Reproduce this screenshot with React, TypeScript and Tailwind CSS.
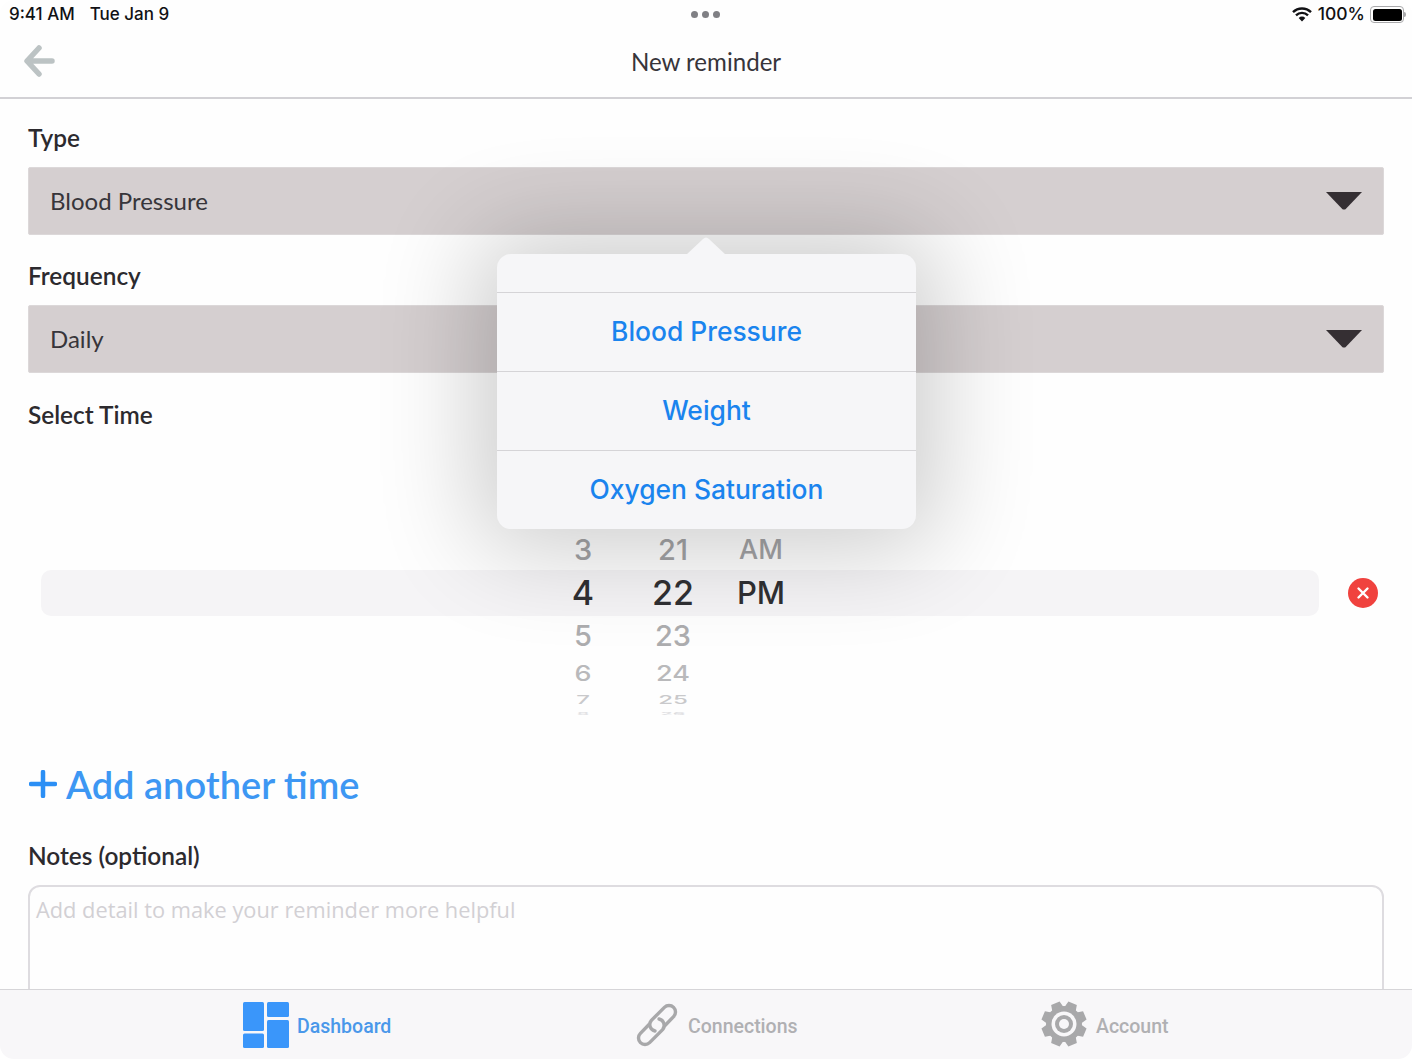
const HOURS = [
  { label: '3', h: 'h-[44px]', cls: 'text-[29px] font-medium text-[#a3a3a5]' },
  { label: '4', h: 'h-[43px]', cls: 'text-[34px] font-medium text-[#303033]' },
  { label: '5', h: 'h-[43px]', cls: 'text-[29px] font-medium text-[#adadaf]' },
  { label: '6', h: 'h-[32px]', cls: 'text-[27px] font-medium text-[#b9b9bb] scale-y-[0.8]' },
  { label: '7', h: 'h-[22px]', cls: 'text-[24px] font-medium text-[#c9c9cb] scale-y-[0.5]' },
  { label: '8', h: 'h-[5px]', cls: 'text-[20px] font-medium text-[#dcdcde] scale-y-[0.2]' },
];

const MINUTES = [
  { label: '21', h: 'h-[44px]', cls: 'text-[29px] font-medium text-[#a3a3a5]' },
  { label: '22', h: 'h-[43px]', cls: 'text-[34px] font-medium text-[#303033]' },
  { label: '23', h: 'h-[43px]', cls: 'text-[29px] font-medium text-[#adadaf]' },
  { label: '24', h: 'h-[32px]', cls: 'text-[27px] font-medium text-[#b9b9bb] scale-y-[0.8]' },
  { label: '25', h: 'h-[22px]', cls: 'text-[24px] font-medium text-[#c9c9cb] scale-y-[0.5]' },
  { label: '26', h: 'h-[5px]', cls: 'text-[20px] font-medium text-[#dcdcde] scale-y-[0.2]' },
];

const OPTIONS = ['Blood Pressure', 'Weight', 'Oxygen Saturation'];

// gear outline with 8 teeth, used for the Account tab
const gearPoints = Array.from({ length: 8 }, (_, i) => {
  const a = (i * Math.PI) / 4 + Math.PI / 8;
  const pt = (r: number, d: number) =>
    `${(24 + r * Math.cos(a + d)).toFixed(2)},${(24 + r * Math.sin(a + d)).toFixed(2)}`;
  return [pt(17, -0.36), pt(23, -0.2), pt(23, 0.2), pt(17, 0.36)].join(' ');
}).join(' ');

function Select({ value }: { value: string }) {
  return (
    <div className="h-[68px] bg-[#d5cfd0] rounded-[2px] border border-[#dcd8d9] flex items-center justify-between pl-[21px] pr-[21px]">
      <span className="font-['Lato'] text-[24px] text-[#37353a]">{value}</span>
      <svg width="36" height="18" viewBox="0 0 36 18">
        <path d="M0 0H36L19.5 17.2Q18 18 16.5 17.2Z" fill="#352f33" />
      </svg>
    </div>
  );
}

function Label({ children, className }: { children: string; className: string }) {
  return <div className={`font-['Lato'] font-semibold text-[24.4px] leading-[30px] text-[#2c2a2e] ${className}`}>{children}</div>;
}

function Wheel({ items, className }: { items: typeof HOURS; className: string }) {
  return (
    <div className={`flex flex-col items-center font-['Inter',sans-serif] ${className}`}>
      {items.map((it) => (
        <div key={it.label} className={`${it.h} flex items-center leading-none ${it.cls}`}>
          {it.label}
        </div>
      ))}
    </div>
  );
}

export default function App() {
  return (
    <div className="relative w-[1412px] h-[1059px] overflow-hidden bg-[#fefefe] flex flex-col">
      {/* status bar */}
      <div className="h-[28px] flex items-center justify-between pl-[9px] pr-[6px] pt-[1px] font-['Inter',sans-serif] font-medium text-[17px] text-[#111114] relative">
        <div className="flex gap-[15px]">
          <span>9:41 AM</span>
          <span>Tue Jan 9</span>
        </div>
        <div className="absolute left-[691px] top-[11px] flex gap-[4px]">
          <span className="w-[7px] h-[7px] rounded-full bg-[#808084]" />
          <span className="w-[7px] h-[7px] rounded-full bg-[#808084]" />
          <span className="w-[7px] h-[7px] rounded-full bg-[#808084]" />
        </div>
        <div className="flex items-center">
          <svg width="20" height="15" viewBox="0 0 20 15" className="mr-[6px]">
            <path d="M1 5.2a12.8 12.8 0 0 1 18 0M4 8.3a8.6 8.6 0 0 1 12 0" fill="none" stroke="#111114" strokeWidth="2.4" />
            <path d="M6.7 10.9a4.7 4.7 0 0 1 6.6 0L10 14.4Z" fill="#111114" />
          </svg>
          <span className="mr-[5px] text-[17.5px]">100%</span>
          <div className="w-[34px] h-[17px] rounded-[4px] border border-[#a9a9ab] p-[1.5px]">
            <div className="w-full h-full rounded-[2.5px] bg-black" />
          </div>
          <div className="w-[2px] h-[5px] rounded-r-[2px] bg-[#a9a9ab]" />
        </div>
      </div>

      {/* header */}
      <div className="h-[71px] shrink-0 relative flex items-center justify-center border-b-[2px] border-[#d2d1d5]">
        <svg width="32" height="32" viewBox="0 0 32 32" className="absolute left-[24px] top-[17px]">
          <path d="M28 16H4M15 3L3 16L15 29" fill="none" stroke="#bcc3c4" strokeWidth="5.5" strokeLinecap="round" strokeLinejoin="round" />
        </svg>
        <span className="font-['Lato'] text-[24.1px] text-[#37353a] -mt-[1px]">New reminder</span>
      </div>

      {/* form */}
      <div className="flex-1 min-h-0 overflow-hidden px-[28px] pt-[24px]">
        <Label className="mb-[14px]">Type</Label>
        <Select value="Blood Pressure" />
        <Label className="mt-[26px] mb-[14px]">Frequency</Label>
        <Select value="Daily" />
        <Label className="mt-[27px]">Select Time</Label>

        <div className="mt-[97px] h-[186px] flex items-start pl-[13px] pr-[6px] relative">
          <div className="absolute left-[13px] top-[43px] w-[1278px] h-[46px] rounded-[10px] bg-[#f5f4f6]" />
          <Wheel items={HOURS} className="relative w-[60px] ml-[512px]" />
          <Wheel items={MINUTES} className="relative w-[60px] ml-[30px]" />
          <div className="relative ml-[28px] w-[60px] flex flex-col items-center font-['Inter',sans-serif] font-medium leading-none">
            <div className="h-[44px] flex items-center text-[27px] text-[#a3a3a5]">AM</div>
            <div className="h-[43px] flex items-center text-[31px] text-[#303033]">PM</div>
          </div>
          <div className="absolute right-[6px] top-[51px] w-[30px] h-[30px] rounded-full bg-[#f0423e] flex items-center justify-center">
            <svg width="14" height="14" viewBox="0 0 14 14">
              <path d="M2.5 2.5L11.5 11.5M11.5 2.5L2.5 11.5" stroke="#fff" strokeWidth="2.4" strokeLinecap="round" />
            </svg>
          </div>
        </div>

        <div className="mt-[49px] flex items-center h-[44px]">
          <svg width="28" height="28" viewBox="0 0 28 28" className="ml-[1px]">
            <path d="M14 2V26M2 14H26" stroke="#2b8ff5" strokeWidth="4.5" strokeLinecap="round" />
          </svg>
          <span className="ml-[9px] font-['Lato'] font-semibold text-[38px] leading-none text-[#3d97f3]">Add another time</span>
        </div>

        <Label className="mt-[35px]">Notes (optional)</Label>
        <div className="mt-[14px] h-[140px] rounded-t-[12px] border-[2px] border-[#dedce0] px-[6px] pt-[7px] font-['Open_Sans',sans-serif] text-[21.8px] text-[#d2d0d4]">
          Add detail to make your reminder more helpful
        </div>
      </div>

      {/* tab bar */}
      <div className="relative h-[70px] shrink-0 bg-[#f8f7f9] border-t border-[#d6d5d8] font-['Roboto',sans-serif] font-medium text-[19.5px]">
        <div className="absolute left-[243px] top-[12px] flex items-center">
          <svg width="46" height="46" viewBox="0 0 46 46">
            <rect x="0" y="0" width="21" height="29" rx="1.5" fill="#3a96fa" />
            <rect x="0" y="31.5" width="21" height="14.5" rx="1.5" fill="#3a96fa" />
            <rect x="24" y="0" width="22" height="15" rx="1.5" fill="#3a96fa" />
            <rect x="24" y="18" width="22" height="28" rx="1.5" fill="#3a96fa" />
          </svg>
          <span className="ml-[8px] mt-[4px] text-[#4a98ea]">Dashboard</span>
        </div>
        <div className="absolute left-[635px] top-[13px] flex items-center">
          <svg width="44" height="44" viewBox="0 0 44 44" fill="none" stroke="#a8a8aa" strokeWidth="3.4" strokeLinecap="round">
            <path d="M30 22.5L38.6 13.6A6.5 6.5 0 0 0 29.4 4.4L16.4 17.4A6.5 6.5 0 0 0 20 28" />
            <path d="M14 21.5L5.4 30.4A6.5 6.5 0 0 0 14.6 39.6L27.6 26.6A6.5 6.5 0 0 0 24 16" />
          </svg>
          <span className="ml-[9px] mt-[4px] text-[#b0b0b3]">Connections</span>
        </div>
        <div className="absolute left-[1040px] top-[10px] flex items-center">
          <svg width="48" height="48" viewBox="0 0 48 48">
            <polygon points={gearPoints} fill="#a8a8aa" />
            <circle cx="24" cy="24" r="18" fill="#a8a8aa" />
            <circle cx="24" cy="24" r="12.5" fill="#f8f7f9" />
            <circle cx="24" cy="24" r="9" fill="#a8a8aa" />
            <circle cx="24" cy="24" r="5" fill="#f8f7f9" />
          </svg>
          <span className="ml-[8px] mt-[6px] text-[#b0b0b3]">Account</span>
        </div>
      </div>

      {/* type popover */}
      <div className="absolute left-[497px] top-[254px] w-[419px] h-[275px] rounded-[14px] bg-[#f6f6f8] shadow-[0_0_100px_20px_rgba(0,0,0,0.2)]">
        <svg width="40" height="18" viewBox="0 0 40 18" className="absolute left-[189px] -top-[17px]">
          <path d="M0 18L17 2Q20 -1 23 2L40 18Z" fill="#f6f6f8" />
        </svg>
        <div className="h-[38px]" />
        {OPTIONS.map((opt) => (
          <div
            key={opt}
            className="h-[79px] border-t border-[#d5d4d7] flex items-center justify-center font-['Inter',sans-serif] font-medium text-[26.4px] text-[#1a84ee]"
          >
            {opt}
          </div>
        ))}
      </div>

      {/* rounded screen corners */}
      <div className="absolute inset-0 pointer-events-none rounded-[14px] shadow-[0_0_0_20px_#ffffff]" />
    </div>
  );
}
